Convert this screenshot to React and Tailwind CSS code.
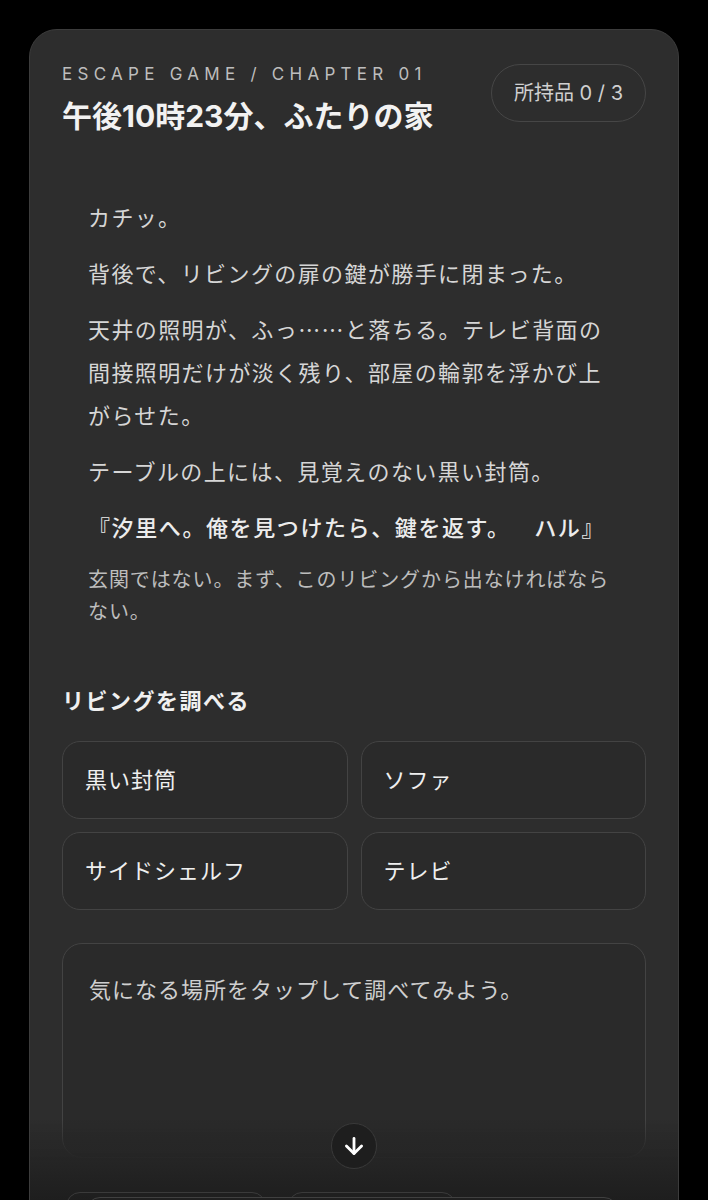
import React from 'react';
import { ArrowDown } from 'lucide-react';

const story = [
  'カチッ。',
  '背後で、リビングの扉の鍵が勝手に閉まった。',
  '天井の照明が、ふっ……と落ちる。テレビ背面の間接照明だけが淡く残り、部屋の輪郭を浮かび上がらせた。',
  'テーブルの上には、見覚えのない黒い封筒。',
];

const spots = ['黒い封筒', 'ソファ', 'サイドシェルフ', 'テレビ'];

const jp = { fontFamily: '"Noto Sans CJK JP", sans-serif' };

const App = () => {
  return (
    <div
      className="min-h-[1200px] bg-black pt-[29px] px-[29px] overflow-hidden [text-spacing-trim:space-all]"
      style={{ fontFamily: 'Inter, "Noto Sans CJK JP", sans-serif' }}
    >
      {/* CARD */}
      <div className="relative bg-[#2d2d2d] border border-[#3c3c3c] rounded-t-[28px] px-[32px] pt-[34px] pb-[120px] min-h-[1300px]">

        {/* HEADER */}
        <div className="flex items-start justify-between">
          <div>
            <p className="text-[17px] leading-[20px] tracking-[0.31em] text-[#bdbdbd]">
              ESCAPE GAME / CHAPTER 01
            </p>
            <h1 className="mt-[14px] text-[30px] leading-[36px] font-bold text-[#f2f2f2]">
              午後10時23分、ふたりの家
            </h1>
          </div>
          <div className="h-[58px] px-[22px] flex items-center rounded-full border-[1.5px] border-[#464646] text-[20px] text-[#d0d0d0]">
            所持品 0 / 3
          </div>
        </div>

        {/* STORY */}
        <div className="mt-[61px] px-[26px] flex flex-col gap-[13px]" style={jp}>
          {story.map((line) => (
            <p key={line} className="text-[22px] leading-[43px] tracking-[1.4px] text-[#d6d6d6]">
              {line}
            </p>
          ))}
          <p className="text-[22px] leading-[43px] tracking-[1.6px] font-medium text-[#ececec]">
            『汐里へ。俺を見つけたら、鍵を返す。　ハル』
          </p>
          <p className="mt-[2px] text-[20px] leading-[32px] tracking-[0.9px] text-[#bdbdbd]">
            玄関ではない。まず、このリビングから出なければならない。
          </p>
        </div>

        {/* SPOTS */}
        <h2 className="mt-[59px] text-[22px] leading-[30px] font-bold tracking-[1.5px] text-[#f0f0f0]">
          リビングを調べる
        </h2>
        <div className="mt-[25px] grid grid-cols-2 gap-[13px]">
          {spots.map((s) => (
            <button
              key={s}
              className="h-[78px] px-[22px] flex items-center text-left rounded-[18px] border-[1.5px] border-[#434343] bg-[#2a2a2a] text-[22px] tracking-[1px] text-[#efefef]"
            >
              {s}
            </button>
          ))}
        </div>

        {/* MESSAGE */}
        <div className="relative mt-[33px] h-[215px] rounded-[20px] border-[1.5px] border-[#434343] bg-[#2a2a2a] px-[26px] pt-[30px]">
          <p className="text-[22px] leading-[32px] tracking-[1px] text-[#cfcfcf]">
            気になる場所をタップして調べてみよう。
          </p>
          <button className="absolute z-20 left-1/2 -translate-x-1/2 bottom-[-12px] w-[46px] h-[46px] rounded-full bg-[#1e1e1e] border-[1.5px] border-[#3a3a3a] flex items-center justify-center text-white">
            <ArrowDown size={26} strokeWidth={2.6} />
          </button>
        </div>
      </div>

      {/* BOTTOM FADE / ACTION BAR */}
      <div className="fixed z-10 left-[30px] right-[30px] bottom-0 h-[80px] bg-gradient-to-b from-[#2d2d2d00] via-[#252525] via-50% to-[#1e1e1e]">
        <div className="flex gap-[22px] pl-[36px] pt-[72px]">
          <div className="w-[200px] h-[40px] rounded-[14px] border-[1.5px] border-[#3a3a3a]" />
          <div className="w-[168px] h-[40px] rounded-[14px] border-[1.5px] border-[#3a3a3a]" />
        </div>
        <div className="absolute left-[56px] right-[60px] top-[77px] h-[40px] rounded-[14px] border-[1.5px] border-[#404040] bg-[#1f1f1f]" />
      </div>
    </div>
  );
};

export default App;
